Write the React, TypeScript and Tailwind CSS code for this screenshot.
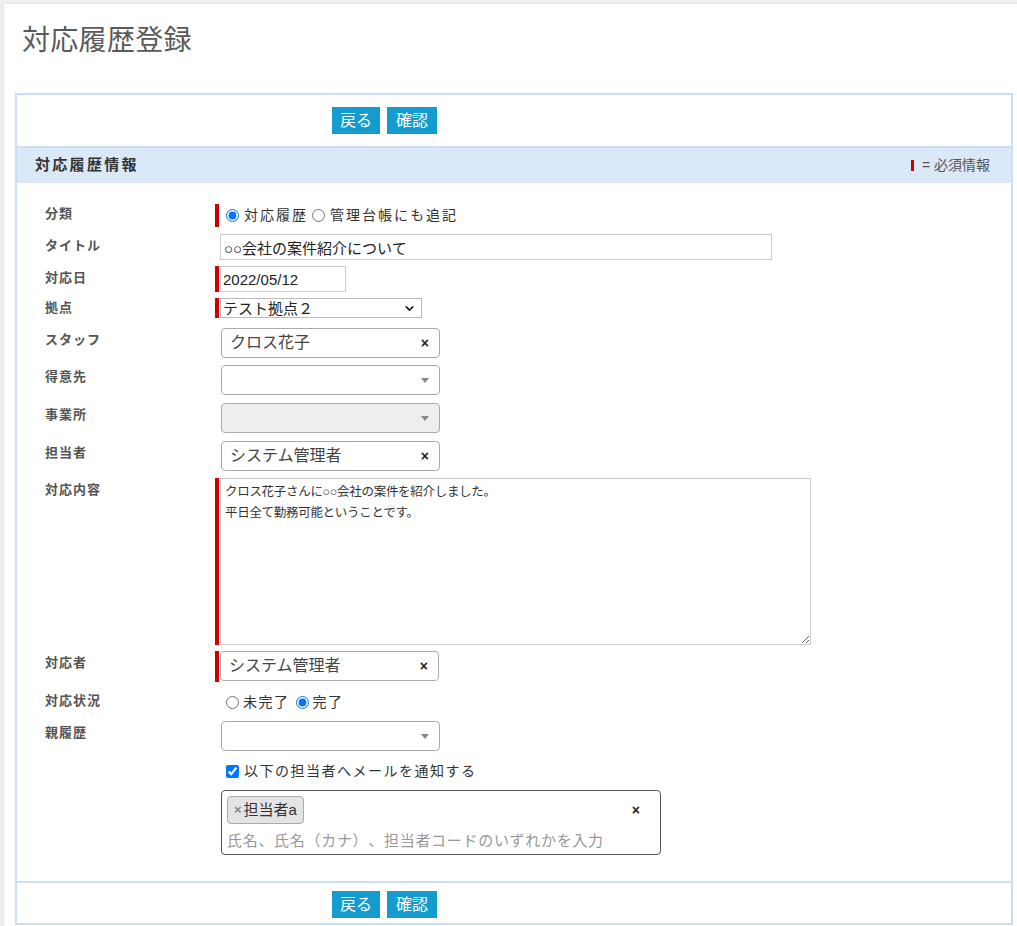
import { ChevronDown } from "lucide-react";

const FONT = "font-['Liberation_Sans','Noto_Sans_CJK_JP',sans-serif]";

// red bar that marks a required field
function Req({ h }: { h: string }) {
  return <span className={`w-[4px] mr-[1px] shrink-0 bg-[#cc0000] ${h}`} />;
}

function Gap() {
  return <span className="w-[5px] shrink-0" />;
}

function Row({
  label,
  mt,
  lt = "pt-[2px]",
  children,
}: {
  label: string;
  mt: string;
  lt?: string;
  children: React.ReactNode;
}) {
  return (
    <div className={`flex items-start ${mt}`}>
      <div className={`w-[170px] shrink-0 text-[13px] leading-5 font-bold tracking-[1px] text-[#555] ${lt}`}>{label}</div>
      <div className="flex items-stretch">{children}</div>
    </div>
  );
}

function Select2({ value, disabled }: { value?: string; disabled?: boolean }) {
  return (
    <div
      className={`ml-[1px] flex h-[30px] w-[219px] items-center rounded-[4px] border border-[#aaa] pl-[8px] pr-[10px] ${
        disabled ? "bg-[#eee]" : "bg-white"
      }`}
    >
      <span className="flex-1 text-[16px] text-[#444]">{value}</span>
      {value ? (
        <span className="text-[14px] font-bold text-[#222]">×</span>
      ) : (
        <span className="h-0 w-0 border-x-[4px] border-t-[5px] border-x-transparent border-t-[#888]" />
      )}
    </div>
  );
}

function Buttons() {
  return (
    <div className="flex gap-[7px] pl-[315px]">
      <button className="h-[27px] bg-[#149bcf] px-[8px] text-[16px] text-white">戻る</button>
      <button className="h-[27px] bg-[#149bcf] px-[9px] text-[16px] text-white">確認</button>
    </div>
  );
}

export default function App() {
  return (
    <div
      className={`min-h-[926px] overflow-hidden bg-[#efefef] pl-[3px] pt-[3px] text-[#333] [text-spacing-trim:space-all] ${FONT}`}
    >
      <div className="min-h-[923px] border-l border-t border-[#dce8f4] bg-white">
        <h1 className="pl-[18px] pt-[21px] text-[28px] leading-[32px] tracking-[0.3px] text-[#5a5a5a]">対応履歴登録</h1>

        <div className="ml-[11px] mr-[4px] mt-[36px] border-2 border-[#c9dff3]">
          {/* actions */}
          <div className="flex h-[51px] items-center">
            <Buttons />
          </div>

          <div className="flex h-[37px] items-center justify-between border-t-2 border-[#c9dff3] bg-[#dae8f7] pl-[18px] pr-[21px]">
            <span className="text-[15px] font-bold tracking-[2.3px] text-[#333]">対応履歴情報</span>
            <span className="flex items-center text-[14px] text-[#555]">
              <span className="mr-[8px] h-[11px] w-[3px] bg-[#cc0000]" />= 必須情報
            </span>
          </div>

          <div className="pb-[26px] pl-[28px] pt-[21px]">
            <Row label="分類" mt="mt-0" lt="pt-0">
              <Req h="h-[23px]" />
              <label className="flex items-center text-[14px] tracking-[2px]">
                <input type="radio" name="kind" defaultChecked className="ml-[6px] mr-[5px] h-[13px] w-[13px]" />
                対応履歴
              </label>
              <label className="flex items-center text-[14px] tracking-[2px]">
                <input type="radio" name="kind" className="ml-[4px] mr-[5px] h-[13px] w-[13px]" />
                管理台帳にも追記
              </label>
            </Row>

            <Row label="タイトル" mt="mt-[7px]">
              <Gap />
              <input
                type="text"
                defaultValue="○○会社の案件紹介について"
                className="h-[26px] w-[552px] border border-[#ccc] px-[3px] text-[15px] text-[#222]"
              />
            </Row>

            <Row label="対応日" mt="mt-[6px]">
              <Req h="h-[26px]" />
              <input
                type="text"
                defaultValue="2022/05/12"
                className="h-[26px] w-[126px] border border-[#ccc] px-[2px] text-[15px] text-[#222]"
              />
            </Row>

            <Row label="拠点" mt="mt-[6px]" lt="pt-0">
              <Req h="h-[20px]" />
              <div className="flex h-[20px] w-[202px] items-center border border-[#bbb] pl-[2px] pr-[5px]">
                <span className="flex-1 text-[15px] leading-none text-[#222]">テスト拠点２</span>
                <ChevronDown size={13} strokeWidth={3.2} className="text-[#222]" />
              </div>
            </Row>

            <Row label="スタッフ" mt="mt-[10px]">
              <Gap />
              <Select2 value="クロス花子" />
            </Row>

            <Row label="得意先" mt="mt-[7px]">
              <Gap />
              <Select2 />
            </Row>

            <Row label="事業所" mt="mt-[8px]">
              <Gap />
              <Select2 disabled />
            </Row>

            <Row label="担当者" mt="mt-[8px]">
              <Gap />
              <Select2 value="システム管理者" />
            </Row>

            <Row label="対応内容" mt="mt-[7px]">
              <Req h="h-[167px]" />
              <textarea
                defaultValue={"クロス花子さんに○○会社の案件を紹介しました。\n平日全て勤務可能ということです。"}
                className="h-[167px] w-[591px] border border-[#ccc] px-[4px] pt-[3px] text-[12.5px] leading-[21px] tracking-[-0.3px] text-[#333]"
              />
            </Row>

            <Row label="対応者" mt="mt-[6px]">
              <Req h="h-[31px]" />
              <div className="-ml-[1px]">
                <Select2 value="システム管理者" />
              </div>
            </Row>

            <Row label="対応状況" mt="mt-[9px]" lt="pt-0">
              <Gap />
              <label className="flex h-[22px] items-center text-[14px] tracking-[1.5px]">
                <input type="radio" name="status" className="ml-[6px] mr-[4px] h-[13px] w-[13px]" />
                未完了
              </label>
              <label className="flex h-[22px] items-center text-[14px] tracking-[1.5px]">
                <input type="radio" name="status" defaultChecked className="ml-[6px] mr-[4px] h-[13px] w-[13px]" />
                完了
              </label>
            </Row>

            <Row label="親履歴" mt="mt-[8px]">
              <Gap />
              <Select2 />
            </Row>

            <Row label="" mt="mt-[9px]">
              <Gap />
              <label className="flex h-[22px] items-center text-[14px] tracking-[1.5px]">
                <input type="checkbox" defaultChecked className="ml-[6px] mr-[5px] h-[13px] w-[13px]" />
                以下の担当者へメールを通知する
              </label>
            </Row>

            <Row label="" mt="mt-[8px]">
              <Gap />
              <div className="ml-[1px] flex h-[65px] w-[440px] flex-col rounded-[4px] border border-[#555] pl-[5px] pr-[20px] pt-[5px]">
                <div className="flex items-start justify-between">
                  <span className="flex h-[28px] items-center rounded-[4px] border border-[#aaa] bg-[#e4e4e4] pl-[6px] pr-[6px] text-[15px] text-[#333]">
                    <span className="mr-[2px] text-[13px] font-bold text-[#888]">×</span>担当者a
                  </span>
                  <span className="mt-[4px] text-[14px] font-bold text-[#222]">×</span>
                </div>
                <span className="mt-[7px] text-[15px] leading-5 tracking-[0.7px] text-[#999]">
                  氏名、氏名（カナ）、担当者コードのいずれかを入力
                </span>
              </div>
            </Row>
          </div>

          {/* actions */}
          <div className="flex border-t-2 border-[#c9dff3] pb-[5px] pt-[8px]">
            <Buttons />
          </div>
        </div>
      </div>
    </div>
  );
}
